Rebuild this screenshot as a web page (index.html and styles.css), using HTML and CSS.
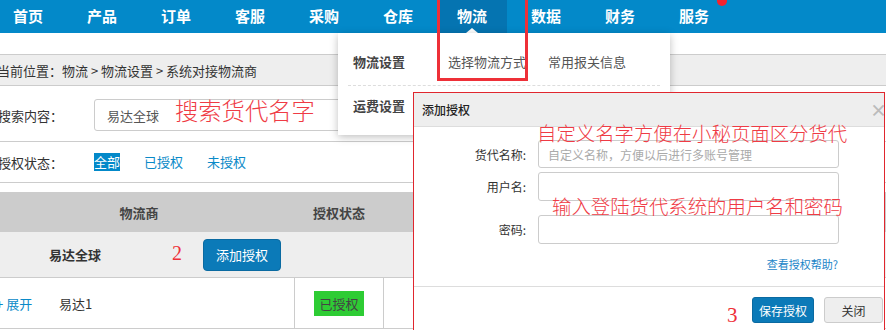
FILE: index.html
```html
<!DOCTYPE html>
<html lang="zh-CN">
<head>
  <meta charset="UTF-8" />
  <title>物流 - 系统对接物流商</title>
  <link rel="stylesheet" href="styles.css">
</head>
<body>

  <div class="nav">
    <ul class="nav-menu">
      <li>首页</li>
      <li>产品</li>
      <li>订单</li>
      <li>客服</li>
      <li>采购</li>
      <li>仓库</li>
      <li class="active">物流</li>
      <li>数据</li>
      <li>财务</li>
      <li>服务<span class="dot"></span></li>
    </ul>
  </div>

  <!-- 物流 submenu -->
  <div class="dropdown">
    <div class="dd-row">
      <span class="dd-title">物流设置</span>
      <a>选择物流方式</a>
      <a>常用报关信息</a>
    </div>
    <div class="dd-row">
      <span class="dd-title">运费设置</span>
    </div>
  </div>

  <div class="crumb">当前位置：物流 &gt; 物流设置 &gt; 系统对接物流商</div>

  <div class="search-row">
    <span class="label">搜索内容：</span>
    <input type="text" class="search-input" value="易达全球" />
    <span class="note note-search">搜索货代名字</span>
  </div>

  <div class="filter-row">
    <span class="label">授权状态：</span>
    <a class="current">全部</a>
    <a>已授权</a>
    <a>未授权</a>
  </div>

  <div class="table">
    <div class="thead">
      <span></span>
      <span>物流商</span>
      <span></span>
      <span>授权状态</span>
      <span></span>
    </div>
    <div class="group-row">
      <span class="group-name">易达全球</span>
      <span class="num num-2">2</span>
      <button class="btn-add">添加授权</button>
    </div>
    <div class="row">
      <span class="cell expand">+ 展开</span>
      <span class="cell name">易达1</span>
      <span class="cell"></span>
      <span class="cell status"><span class="badge">已授权</span></span>
      <span class="cell"></span>
    </div>
  </div>

  <div class="modal">
    <div class="modal-head">
      <span class="modal-title">添加授权</span>
      <span class="close-x">×</span>
    </div>
    <div class="modal-body">
      <div class="form-row">
        <label>货代名称:</label>
        <input type="text" placeholder="自定义名称，方便以后进行多账号管理" />
      </div>
      <div class="form-row row-user">
        <label>用户名:</label>
        <input type="text" />
      </div>
      <div class="form-row row-pass">
        <label>密码:</label>
        <input type="password" />
      </div>
      <div class="help"><a>查看授权帮助?</a></div>
    </div>
    <div class="modal-foot">
      <button class="btn-save">保存授权</button>
      <button class="btn-close">关闭</button>
    </div>
    <span class="note note-name">自定义名字方便在小秘页面区分货代</span>
    <span class="note note-login">输入登陆货代系统的用户名和密码</span>
    <span class="num num-3">3</span>
  </div>

  <div class="mark-box"></div>
  <span class="num num-1">1</span>

</body>
</html>
```

FILE: styles.css
```css
* {
  box-sizing: border-box;
}
html, body {
  overflow: hidden;
}
body {
  position: relative;
  margin: 0;
  width: 886px;
  height: 330px;
  font-family: "Noto Sans CJK SC", "Liberation Sans", sans-serif;
  font-size: 13px;
  color: #333;
  background: #fff;
}
a {
  cursor: pointer;
}

/* top menu */
.nav {
  height: 33px;
  background: #0389c9;
}
.nav-menu {
  display: flex;
  margin: 0 0 0 -7px;
  padding: 0;
  list-style: none;
}
.nav-menu li {
  position: relative;
  flex: none;
  width: 70px;
  height: 33px;
  margin-right: 4px;
  text-align: center;
  line-height: 31px;
  font-size: 15px;
  font-weight: bold;
  color: #fff;
}
.nav-menu li.active {
  background: #0574b1;
}
.nav-menu li.active:after {
  content: "";
  position: absolute;
  left: 50%;
  bottom: 0;
  margin-left: -6px;
  border-left: 6px solid transparent;
  border-right: 6px solid transparent;
  border-bottom: 5px solid #fff;
}
.dot {
  position: absolute;
  left: 58px;
  top: -4px;
  width: 10px;
  height: 10px;
  border-radius: 50%;
  background: #f5222d;
}

/* submenu */
.dropdown {
  position: absolute;
  left: 338px;
  top: 33px;
  width: 332px;
  height: 102px;
  padding: 0 10px;
  background: #fff;
  box-shadow: 0 2px 8px rgba(0,0,0,0.25);
  z-index: 5;
}
.dd-row {
  display: flex;
  padding: 17px 0 11px 5px;
  line-height: 24px;
  border-bottom: 1px dashed #ddd;
}
.dd-row + .dd-row {
  padding: 8px 0 8px 5px;
  border-bottom: none;
}
.dd-title {
  width: 95px;
  font-weight: bold;
  color: #444;
}
.dd-row a {
  margin-right: 22px;
  color: #555;
}

/* breadcrumb */
.crumb {
  margin-top: 21px;
  height: 32px;
  padding-top: 2px;
  line-height: 28px;
  text-indent: -3px;
  background: #eee;
  border-top: 1px solid #ccc;
  border-bottom: 1px solid #ccc;
}

/* search + filter */
.search-row {
  position: relative;
  display: flex;
  align-items: center;
  height: 56px;
  padding-top: 3px;
  border-bottom: 1px solid #ccc;
}
.label {
  flex: none;
  width: 96px;
  margin-left: -2px;
}
.search-input {
  width: 310px;
  height: 32px;
  padding: 0 12px;
  border: 1px solid #ccc;
  border-radius: 3px;
  font-family: inherit;
  font-size: 13px;
  color: #555;
}
.filter-row {
  display: flex;
  align-items: center;
  height: 41px;
  border-bottom: 1px solid #ccc;
}
.filter-row a {
  margin-right: 24px;
  line-height: 18px;
  color: #0a8ac8;
}
.filter-row a.current {
  background: #0389c9;
  color: #fff;
}

/* table */
.table {
  margin-top: 9px;
}
.thead, .row {
  display: grid;
  grid-template-columns: 56px 166px 72px 90px 1fr;
}
.thead {
  height: 40px;
  align-items: center;
  text-align: center;
  background: #ccc;
  font-weight: bold;
  color: #444;
}
.group-row {
  position: relative;
  display: flex;
  align-items: center;
  height: 46px;
  padding-left: 49px;
  background: #eee;
  border-bottom: 1px solid #ccc;
}
.group-name {
  font-weight: bold;
}
.btn-add {
  margin-left: 102px;
  width: 78px;
  height: 32px;
  padding: 0;
  background: #0b7ab8;
  border: 1px solid #0a6aa1;
  border-radius: 4px;
  color: #fff;
  font-family: inherit;
  font-size: 13px;
}
.row {
  height: 51px;
  border-bottom: 1px solid #ccc;
}
.cell {
  display: flex;
  align-items: center;
}
.expand {
  margin-left: -4px;
  color: #0a8ac8;
}
.name {
  padding-left: 3px;
}
.status {
  justify-content: center;
  border-left: 1px solid #ccc;
  border-right: 1px solid #ccc;
}
.badge {
  padding: 0 5px;
  line-height: 25px;
  background: #2ecc34;
  color: #444;
}

/* modal */
.modal {
  position: absolute;
  left: 413px;
  top: 92px;
  width: 472px;
  height: 238px;
  background: #fff;
  border: 1px solid #e0262e;
  border-bottom: none;
  z-index: 10;
}
.modal-head {
  display: flex;
  align-items: center;
  justify-content: space-between;
  height: 34px;
  padding: 0 0 0 8px;
  background: #eee;
  border-bottom: 1px solid #ddd;
  font-size: 12px;
}
.modal-title {
  font-weight: 500;
  color: #222;
}
.close-x {
  margin-right: -3px;
  font-size: 17px;
  font-weight: bold;
  color: #bbb;
}
.modal-body {
  padding-top: 13px;
}
.form-row {
  display: flex;
  align-items: center;
}
.form-row label {
  width: 116px;
  padding-right: 4px;
  text-align: right;
  font-size: 12px;
}
.form-row input {
  margin-left: 8px;
  width: 301px;
  height: 28px;
  padding: 0 9px;
  border: 1px solid #ccc;
  border-radius: 3px;
  font-family: inherit;
  font-size: 12px;
}
.form-row input::placeholder {
  color: #aaa;
}
.row-user {
  margin-top: 4px;
}
.row-pass {
  margin-top: 14px;
}
.row-user input, .row-pass input {
  height: 29px;
}
.help {
  width: 424px;
  margin-top: 12px;
  text-align: right;
  font-size: 11px;
  line-height: 16px;
}
.help a {
  color: #1a85c8;
}
.modal-foot {
  display: flex;
  justify-content: flex-end;
  margin-top: 14px;
  padding: 10px 1px 0 0;
  border-top: 1px solid #ddd;
}
.modal-foot button {
  height: 26px;
  padding: 0;
  border-radius: 3px;
  font-family: inherit;
  font-size: 12px;
}
.btn-save {
  width: 62px;
  background: #0b7ab8;
  border: 1px solid #0a6aa1;
  color: #fff;
}
.btn-close {
  width: 59px;
  margin-left: 10px;
  background: #eee;
  border: 1px solid #ccc;
  color: #333;
}

/* red annotations */
.note {
  position: absolute;
  font-weight: 300;
  color: #ef3b45;
  white-space: nowrap;
}
.note-search {
  left: 175px;
  top: 9px;
  font-size: 23.3px;
  line-height: 30px;
}
.note-name {
  left: 123px;
  top: 28px;
  font-size: 19.4px;
  line-height: 24px;
}
.note-login {
  left: 138px;
  top: 101px;
  font-size: 19.4px;
  line-height: 24px;
}
.num {
  position: absolute;
  font-family: "Liberation Serif", serif;
  color: #ee3038;
  line-height: 20px;
}
.num-1 {
  left: 417px;
  top: 32px;
  font-size: 15px;
}
.num-2 {
  left: 172px;
  top: 11px;
  font-size: 20px;
}
.num-3 {
  left: 313px;
  top: 212px;
  font-size: 21px;
}
.mark-box {
  position: absolute;
  left: 437px;
  top: -3px;
  width: 91px;
  height: 84px;
  border: 3px solid #ee3038;
  z-index: 20;
}
```
